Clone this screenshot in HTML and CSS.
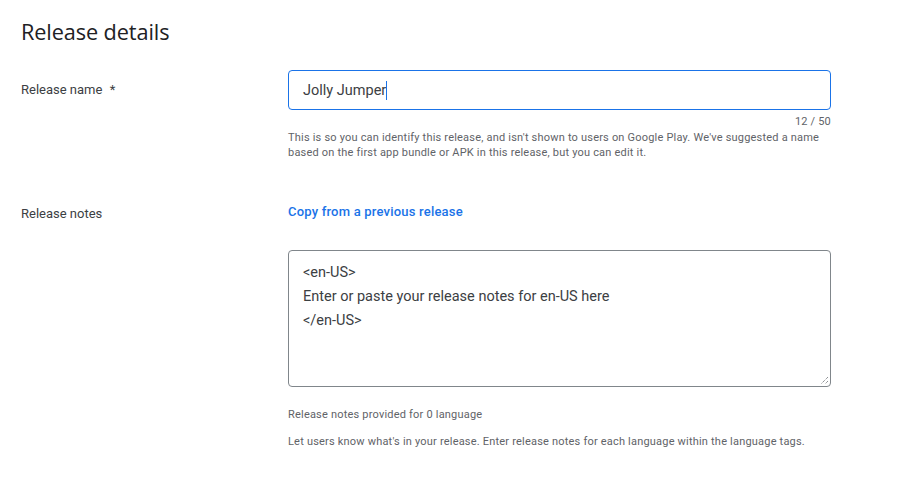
FILE: index.html
```html
<!DOCTYPE html>
<html lang="en">
<head>
<meta charset="utf-8">
<title>Release details</title>
<link rel="stylesheet" href="styles.css">
</head>
<body>
<main class="page">
  <h1 class="title">Release details</h1>

  <section class="row row-name">
    <div class="label">Release name <span class="req">*</span></div>
    <div class="field">
      <div class="input focused"><span class="value">Jolly Jumper</span><span class="caret"></span></div>
      <div class="counter">12 / 50</div>
      <p class="help">This is so you can identify this release, and isn't shown to users on Google Play. We've suggested a name based on the first app bundle or APK in this release, but you can edit it.</p>
    </div>
  </section>

  <section class="row row-notes">
    <div class="label">Release notes</div>
    <div class="field">
      <a class="link" href="#">Copy from a previous release</a>
      <div class="textarea">
        <div class="line">&lt;en-US&gt;</div>
        <div class="line">Enter or paste your release notes for en-US here</div>
        <div class="line">&lt;/en-US&gt;</div>
        <svg class="grip" width="9" height="9" viewBox="0 0 9 9"><path d="M8 1 L1 8 M8 5 L5 8" stroke="#5f6368" stroke-width="1" stroke-dasharray="1 1" fill="none"/></svg>
      </div>
      <p class="note first">Release notes provided for 0 language</p>
      <p class="note">Let users know what's in your release. Enter release notes for each language within the language tags.</p>
    </div>
  </section>
</main>
</body>
</html>
```

FILE: styles.css
```css
* { box-sizing: border-box; }
html, body { margin: 0; padding: 0; background: #fff; }
body {
  font-family: Roboto, "Liberation Sans", Arial, sans-serif;
  color: #3c4043;
}
.page {
  padding: 18px 0 0 21px;
  width: 920px;
}
.title {
  margin: 0;
  font-family: "Open Sans", Roboto, sans-serif;
  font-weight: 500;
  font-size: 21.7px;
  line-height: 28px;
  color: #202124;
  letter-spacing: -0.1px;
}
.row {
  display: grid;
  grid-template-columns: 267px 543px;
}
.row-name { margin-top: 24px; }
.row-notes { margin-top: 42px; }
.label {
  font-size: 13px;
  line-height: 20px;
  color: #3c4043;
}
.row-name .label { padding-top: 10px; }
.row-notes .label { padding-top: 2px; }
.req { margin-left: 4px; }
.input {
  height: 40px;
  border: 1px solid #1a73e8;
  border-radius: 4px;
  padding: 0 14px;
  display: flex;
  align-items: center;
  font-size: 14.5px;
  color: #3c4043;
}
.caret {
  display: inline-block;
  width: 1px;
  height: 19px;
  background: #1a73e8;
  margin-top: 1px;
}
.counter {
  text-align: right;
  font-size: 11px;
  line-height: 15px;
  color: #5f6368;
  margin-top: 4px;
  letter-spacing: 0.2px;
}
.help {
  margin: 1px 0 0;
  font-size: 11px;
  line-height: 15px;
  color: #5f6368;
  letter-spacing: 0.2px;
}
.link {
  display: block;
  font-size: 13px;
  font-weight: 500;
  line-height: 20px;
  color: #1a73e8;
  text-decoration: none;
  letter-spacing: 0.2px;
}
.textarea {
  position: relative;
  margin-top: 28px;
  height: 137px;
  border: 1px solid #80868b;
  border-radius: 4px;
  padding: 10px 14px;
  font-size: 14.5px;
  line-height: 23.8px;
  color: #3c4043;
}
.grip {
  position: absolute;
  right: 1px;
  bottom: 1px;
}
.note {
  margin: 0;
  font-size: 11px;
  line-height: 16px;
  color: #5f6368;
  letter-spacing: 0.2px;
}
.note.first { margin-top: 20px; }
.note + .note { margin-top: 11px; }
```
